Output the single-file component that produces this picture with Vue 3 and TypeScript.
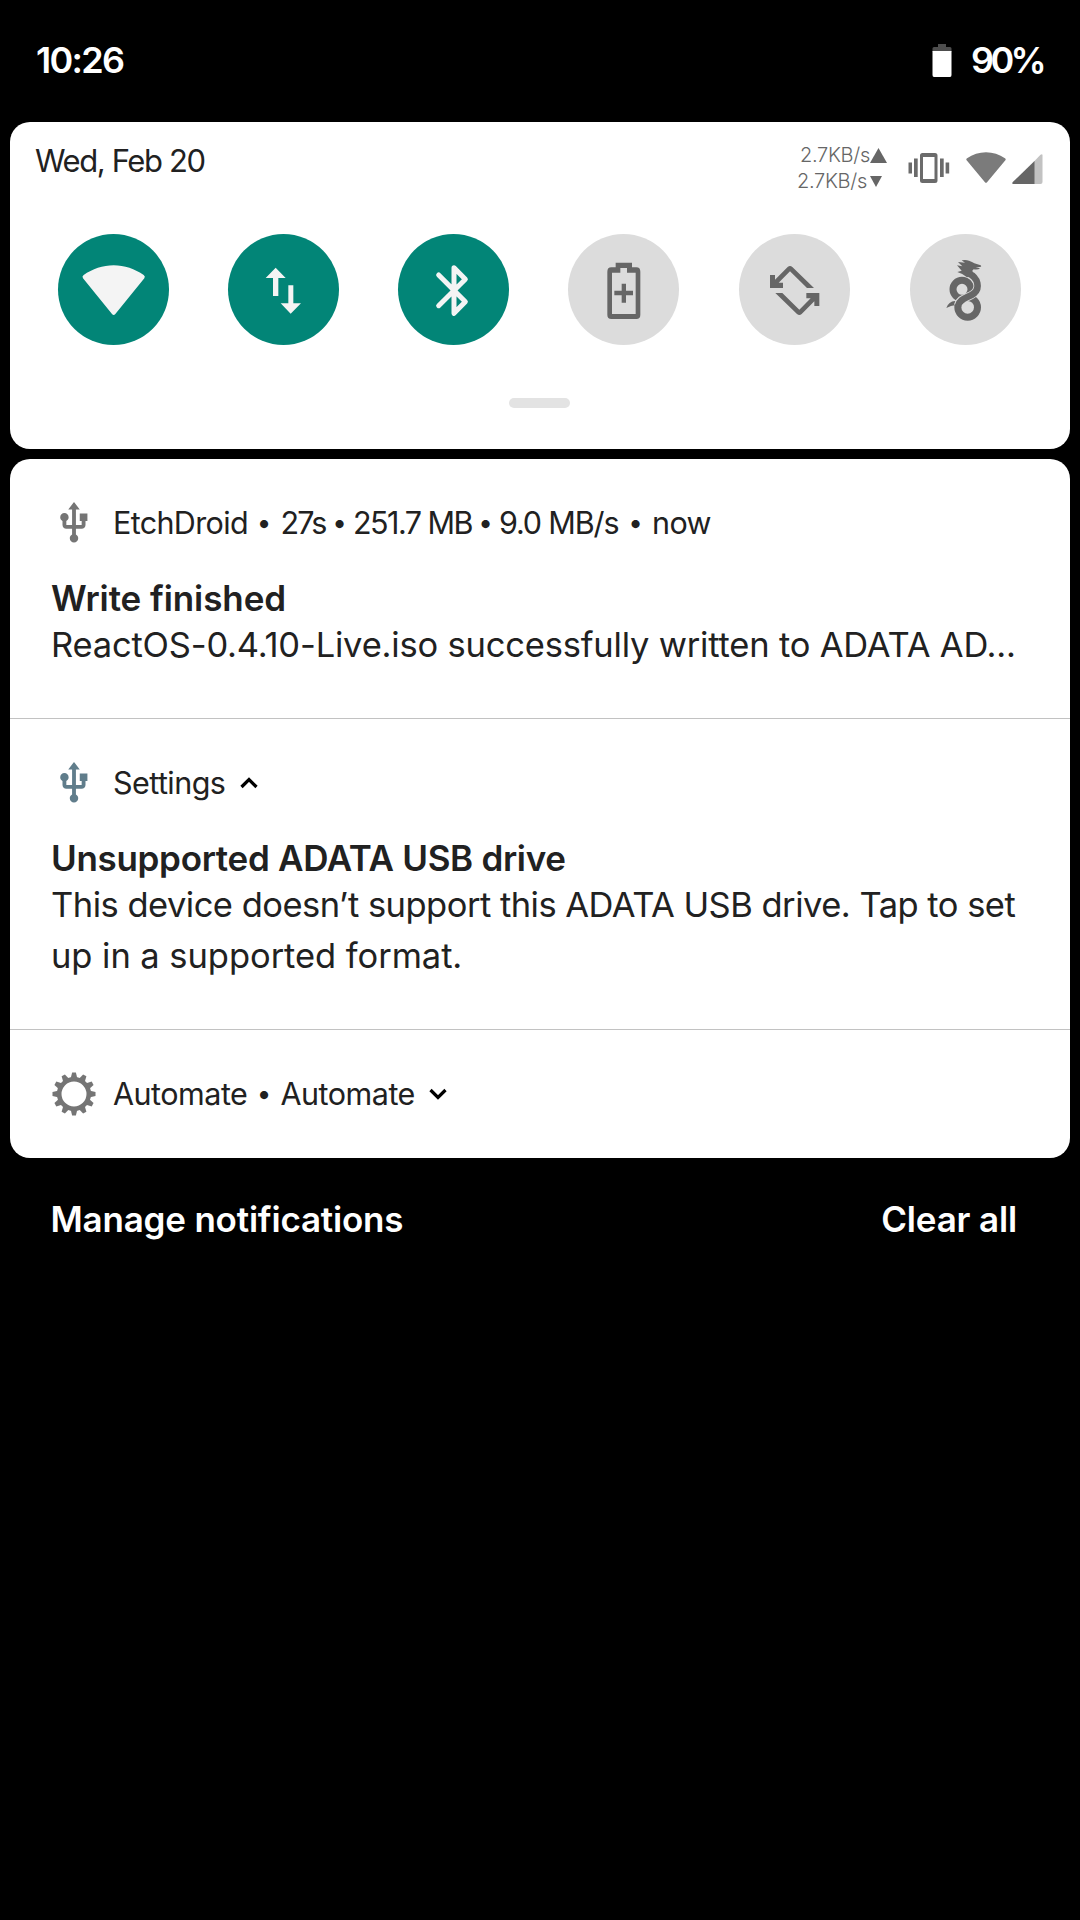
<script setup lang="ts">
const fan = 'M132 165C158 146 190 135.500 222 135.500S286 146 312 165Q318 169 314 175L227 282Q222 288 217 282L130 175Q126 169 132 165Z'
const turn = 'M151 165H166V179L204 141Q211 135 218 141L283 204H262L211 154 177 188H190V204H151Z'
const usb = 'M15 7v4h1v2h-3V5h2l-3-4-3 4h2v8H8v-2.070c.7-.37 1.200-1.080 1.200-1.930 0-1.210-.99-2.200-2.200-2.200-1.210 0-2.200.99-2.200 2.200 0 .85.5 1.560 1.200 1.930V13c0 1.110.89 2 2 2h3v3.050c-.71.37-1.200 1.100-1.200 1.950 0 1.220.99 2.200 2.200 2.200 1.210 0 2.200-.98 2.200-2.200 0-.85-.49-1.580-1.200-1.950V15h3c1.110 0 2-.89 2-2v-2h1V7h-4z'

interface Tile { name: string; on: boolean; box: string }
const tiles: Tile[] = [
  { name: 'wifi', on: true, box: '55 42 333 333' },
  { name: 'data', on: true, box: '565 42 333 333' },
  { name: 'bluetooth', on: true, box: '55 42 333 333' },
  { name: 'saver', on: false, box: '565 42 333 333' },
  { name: 'rotate', on: false, box: '58 42 333 333' },
  { name: 'dragon', on: false, box: '571 42 333 333' },
]
const teeth: number[] = Array.from({ length: 12 }, (_, i) => i * 30)
</script>

<template>
  <div class="screen">
    <header class="status">
      <span class="clock">10:26</span>
      <div class="power">
        <svg width="20" height="34" viewBox="0 0 20 34">
          <path fill="#4d4d4d" d="M6 1h8v3h4q1.500 0 1.500 1.500V9H.5V5.500Q.5 4 2 4h4z" />
          <path fill="#fff" d="M.5 8h19v24q0 2-1.500 2H2q-1.500 0-1.500-2z" />
        </svg>
        <span class="percent">90%</span>
      </div>
    </header>

    <section class="card quick">
      <div class="info">
        <span class="date">Wed, Feb 20</span>
        <div class="indicators">
          <div class="traffic">
            <div class="rate up"><span>2.7KB/s</span><svg width="17" height="15" viewBox="0 0 17 15"><path d="M8.500 0 17 15H0z" /></svg></div>
            <div class="rate down"><span>2.7KB/s</span><svg width="12" height="11" viewBox="0 0 12 11"><path d="M0 0h12L6 11z" /></svg></div>
          </div>
          <svg class="vibrate" width="42" height="30" viewBox="0 0 42 30">
            <path fill="#6b6b6b" fill-rule="evenodd" d="M14.500 0h12.500q2.500 0 2.500 2.500v25q0 2.500-2.500 2.500H14.500q-2.500 0-2.500-2.500v-25Q12 0 14.500 0zM15 4v22h11.500v-22zM.5 9.500H4v11H.5zM6 5.500h3.700v18.500H6zM32 5.500h3.700v18.500H32zM37.600 9.500h3.600v11h-3.600z" />
          </svg>
          <svg class="wifi" width="40" height="31" viewBox="127 134 190 152" preserveAspectRatio="none"><path fill="#7b7b7b" :d="fan" /></svg>
          <svg class="signal" width="31" height="30" viewBox="0 0 31 30">
            <path fill="#c2c2c2" d="M22 7.500 28.500.8Q30.500-.8 30.500 1.500V28q0 2-2 2H22z" />
            <path fill="#666" d="M22.500 7V30H1.500Q-.8 30 .8 28z" />
          </svg>
        </div>
      </div>
      <div class="tiles">
        <div v-for="t in tiles" :key="t.name" class="tile" :class="{ on: t.on }">
          <svg width="111" height="111" :viewBox="t.box">
            <path v-if="t.name === 'wifi'" :d="fan" />
            <path v-else-if="t.name === 'data'" d="M708 143 738 174H716V228H700V174H678ZM753 281 723 250H746V196H761V250H784Z" />
            <path v-else-if="t.name === 'bluetooth'" class="line" d="M177 165 257 245 223 280V143L257 178 177 257" />
            <path v-else-if="t.name === 'saver'" fill-rule="evenodd" d="M708 128H757V142H770Q782 142 782 155V284Q782 297 770 297H695Q683 297 683 284V155Q683 142 695 142H708ZM722 144V158H697V282H768V158H742V144ZM726 191H739V212H760V226H739V248H726V226H704V212H726Z" />
            <g v-else-if="t.name === 'rotate'">
              <path :d="turn" />
              <path transform="rotate(180 225 211.500)" :d="turn" />
            </g>
            <g v-else class="dragon">
              <path d="M680 264Q687 244 706 243L712 254Q692 256 680 264Z" />
              <circle cx="727" cy="208" r="27" />
              <circle cx="744" cy="262" r="29.500" />
              <path class="gap" d="M746 160C777 174 781 205 763 220C746 234 720 234 715 256" />
              <path class="body" d="M746 160C777 174 781 205 763 220C746 234 720 234 715 258" />
              <path d="M726 121Q738 118 748 122Q758 125 764 130L783 136Q787 139 782 141L768 141 781 145Q776 150 762 148Q756 151 759 158L766 166 742 172Q728 160 713 156L726 152 712 136 728 139 715 126 736 128Z" />
            </g>
          </svg>
        </div>
      </div>
      <div class="handle"></div>
    </section>

    <section class="card list">
      <article class="note first">
        <div class="head">
          <svg class="usb" width="46" height="46" viewBox="0 0 24 24" fill="#757575"><path :d="usb" /></svg>
          <span class="app">EtchDroid</span><span class="dot wide">•</span><span class="secs">27s</span><span class="dot">•</span><span class="size">251.7 MB</span><span class="dot">•</span><span class="speed">9.0 MB/s</span><span class="dot wide">•</span><span class="when">now</span>
        </div>
        <h2>Write finished</h2>
        <p><span class="result">ReactOS-0.4.10-Live.iso successfully written to ADATA AD...</span></p>
      </article>
      <article class="note second">
        <div class="head">
          <svg class="usb" width="46" height="46" viewBox="0 0 24 24" fill="#607d8b"><path :d="usb" /></svg>
          <span class="settings">Settings</span>
          <svg class="chev" width="18" height="12" viewBox="0 0 18 12"><path d="M1.500 10 9 2.500 16.500 10" /></svg>
        </div>
        <h2 class="warn">Unsupported ADATA USB drive</h2>
        <p><span class="detail">This device doesn’t support this ADATA USB drive. Tap to set</span><br /><span class="detail-end">up in a supported format.</span></p>
      </article>
      <article class="note third">
        <div class="head">
          <svg class="gear" width="46" height="46" viewBox="-23 -23 46 46">
            <circle r="14.800" />
            <path v-for="a in teeth" :key="a" :transform="`rotate(${a})`" d="M-3.200-16-1.900-21.500H1.900L3.200-16Z" />
          </svg>
          <span class="auto">Automate</span><span class="dot wide">•</span><span class="auto">Automate</span>
          <svg class="chev" width="18" height="12" viewBox="0 0 18 12"><path d="M1.500 2 9 9.500 16.500 2" /></svg>
        </div>
      </article>
    </section>

    <footer class="actions"><span class="manage">Manage notifications</span><span class="clear">Clear all</span></footer>
  </div>
</template>

<style>
body { background: #000; }
</style>

<style scoped>
.screen { width: 1080px; height: 1920px; box-sizing: border-box; background: #000; font-family: Inter, sans-serif; color: #212121; overflow: hidden; }
.screen span { white-space: nowrap; }
.screen svg { flex: none; }
.status { height: 122px; box-sizing: border-box; padding: 0 33px 2px 36px; display: flex; justify-content: space-between; align-items: center; color: #fff; font-size: 36px; font-weight: 600; }
.clock { letter-spacing: -1.700px; }
.power { display: flex; align-items: center; gap: 19px; }
.percent { width: 76px; letter-spacing: -3.600px; }
.card { margin: 0 10px; background: #fff; border-radius: 20px; overflow: hidden; }
.quick { height: 327px; }
.info { height: 112px; display: flex; justify-content: space-between; padding: 0 27px 0 25px; box-sizing: border-box; }
.date { font-size: 31px; line-height: 38px; margin-top: 20px; letter-spacing: -1.400px; }
.indicators { display: flex; align-items: flex-start; color: #666; font-size: 20px; font-weight: 300; }
.traffic { width: 90px; margin: 20px 21px 0 0; }
.traffic svg { fill: #666; }
.rate { display: flex; align-items: center; height: 26px; letter-spacing: -0.300px; }
.up { margin-left: 3px; }
.down svg { margin-left: 3px; }
.vibrate { margin: 31px 16px 0 0; }
.wifi { margin: 30px 6px 0 0; }
.signal { margin-top: 32px; }
.tiles { display: grid; grid-template-columns: 170px 170px 170px 171px 171px 111px; padding-left: 48.400px; }
.tile { width: 111px; height: 111px; border-radius: 50%; background: #dcdcdc; fill: #666; }
.tile.on { background: #028577; fill: #f4f4f4; }
.tile svg { display: block; }
.line { fill: none; stroke: #f4f4f4; stroke-width: 15; stroke-linecap: round; stroke-linejoin: round; }
.dragon circle { fill: none; stroke: #666; stroke-width: 21; }
.dragon .gap { fill: none; stroke: #dcdcdc; stroke-width: 25; }
.dragon .body { fill: none; stroke: #666; stroke-width: 20; }
.handle { width: 61px; height: 10px; border-radius: 5px; background: #e3e3e3; margin: 53px auto 0 499px; }
.list { margin-top: 10px; height: 699px; }
.note { box-sizing: border-box; padding: 0 41px; border-bottom: 1px solid #c2c2c2; }
.first { height: 260px; }
.second { height: 311px; }
.third { border: 0; height: 128px; }
.head { display: flex; align-items: center; height: 46px; padding-top: 41px; font-size: 30.500px; }
.head span { margin-top: -1px; }
.usb { margin-right: 16px; }
.dot { width: 27px; text-align: center; font-size: 26px; }
.dot.wide { width: 33px; }
.app { width: 134.500px; letter-spacing: -0.650px; }
.secs { width: 45.500px; letter-spacing: -1.900px; }
.size { width: 119px; letter-spacing: -1.550px; }
.speed { width: 120px; letter-spacing: -1.150px; }
.when { letter-spacing: -0.600px; }
.settings { width: 113px; letter-spacing: -0.550px; }
.auto { width: 134.500px; letter-spacing: -0.500px; }
.chev { fill: none; stroke: #000; stroke-width: 3.200; margin-left: 13.500px; }
.gear { fill: #757575; margin-right: 16px; }
.gear circle { fill: none; stroke: #757575; stroke-width: 4.600; }
h2 { margin: 30px 0 0; font-size: 35px; font-weight: 600; line-height: 44px; letter-spacing: -0.080px; }
h2.warn { letter-spacing: -0.310px; }
p { margin: -1px 0 0; font-size: 34.500px; line-height: 51px; }
.result { letter-spacing: -0.190px; }
.detail { letter-spacing: -0.510px; }
.detail-end { letter-spacing: -0.050px; }
.actions { height: 122px; padding: 0 63px 0 50.500px; display: flex; justify-content: space-between; align-items: center; color: #fff; font-size: 35px; font-weight: 600; }
.manage { letter-spacing: -0.200px; }
.clear { letter-spacing: -0.150px; }
</style>
